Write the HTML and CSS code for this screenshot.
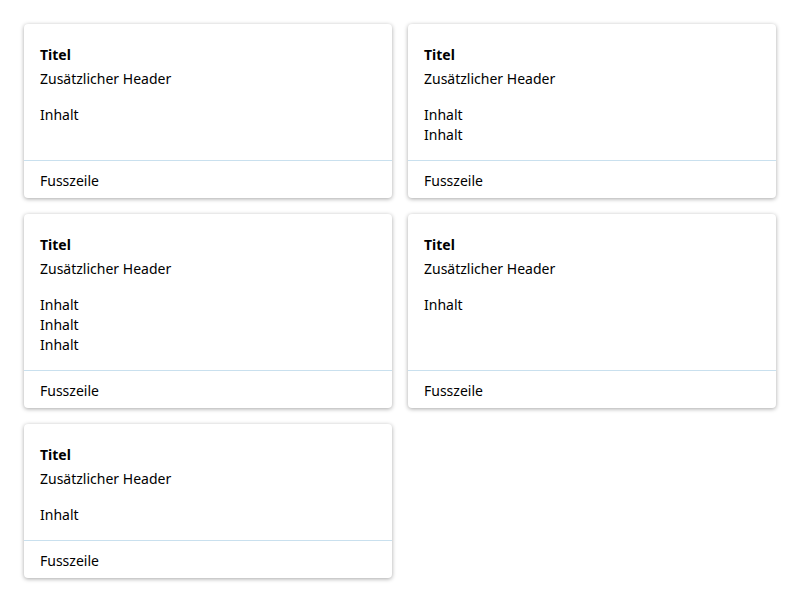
FILE: index.html
```html
<!DOCTYPE html>
<html lang="de">
<head>
<meta charset="utf-8">
<link rel="stylesheet" href="styles.css">
</head>
<body>
<div class="grid">
  <div class="card">
    <div class="card-body">
      <div class="title">Titel</div>
      <div class="subheader">Zusätzlicher Header</div>
      <div class="content"><div>Inhalt</div></div>
    </div>
    <div class="card-footer">Fusszeile</div>
  </div>
  <div class="card">
    <div class="card-body">
      <div class="title">Titel</div>
      <div class="subheader">Zusätzlicher Header</div>
      <div class="content"><div>Inhalt</div><div>Inhalt</div></div>
    </div>
    <div class="card-footer">Fusszeile</div>
  </div>
  <div class="card">
    <div class="card-body">
      <div class="title">Titel</div>
      <div class="subheader">Zusätzlicher Header</div>
      <div class="content"><div>Inhalt</div><div>Inhalt</div><div>Inhalt</div></div>
    </div>
    <div class="card-footer">Fusszeile</div>
  </div>
  <div class="card">
    <div class="card-body">
      <div class="title">Titel</div>
      <div class="subheader">Zusätzlicher Header</div>
      <div class="content"><div>Inhalt</div></div>
    </div>
    <div class="card-footer">Fusszeile</div>
  </div>
  <div class="card">
    <div class="card-body">
      <div class="title">Titel</div>
      <div class="subheader">Zusätzlicher Header</div>
      <div class="content"><div>Inhalt</div></div>
    </div>
    <div class="card-footer">Fusszeile</div>
  </div>
</div>
</body>
</html>
```
FILE: styles.css
```css
html, body {
  margin: 0;
  padding: 0;
  background: #ffffff;
}
body {
  font-family: "Noto Sans", "DejaVu Sans", sans-serif;
  font-size: 14px;
  line-height: 20px;
  color: #000000;
}
.grid {
  display: grid;
  grid-template-columns: 368px 368px;
  gap: 16px;
  padding: 24px;
}
.card {
  display: flex;
  flex-direction: column;
  background: #ffffff;
  border-radius: 4px;
  box-shadow: 0 1px 4px rgba(0, 0, 0, 0.35);
}
.card-body {
  flex: 1;
  padding: 21px 16px 15px;
}
.title {
  font-weight: 700;
}
.subheader {
  margin-top: 4px;
}
.content {
  margin-top: 16px;
}
.card-footer {
  border-top: 1px solid #c9e0ee;
  padding: 10px 16px 7px;
}
```
